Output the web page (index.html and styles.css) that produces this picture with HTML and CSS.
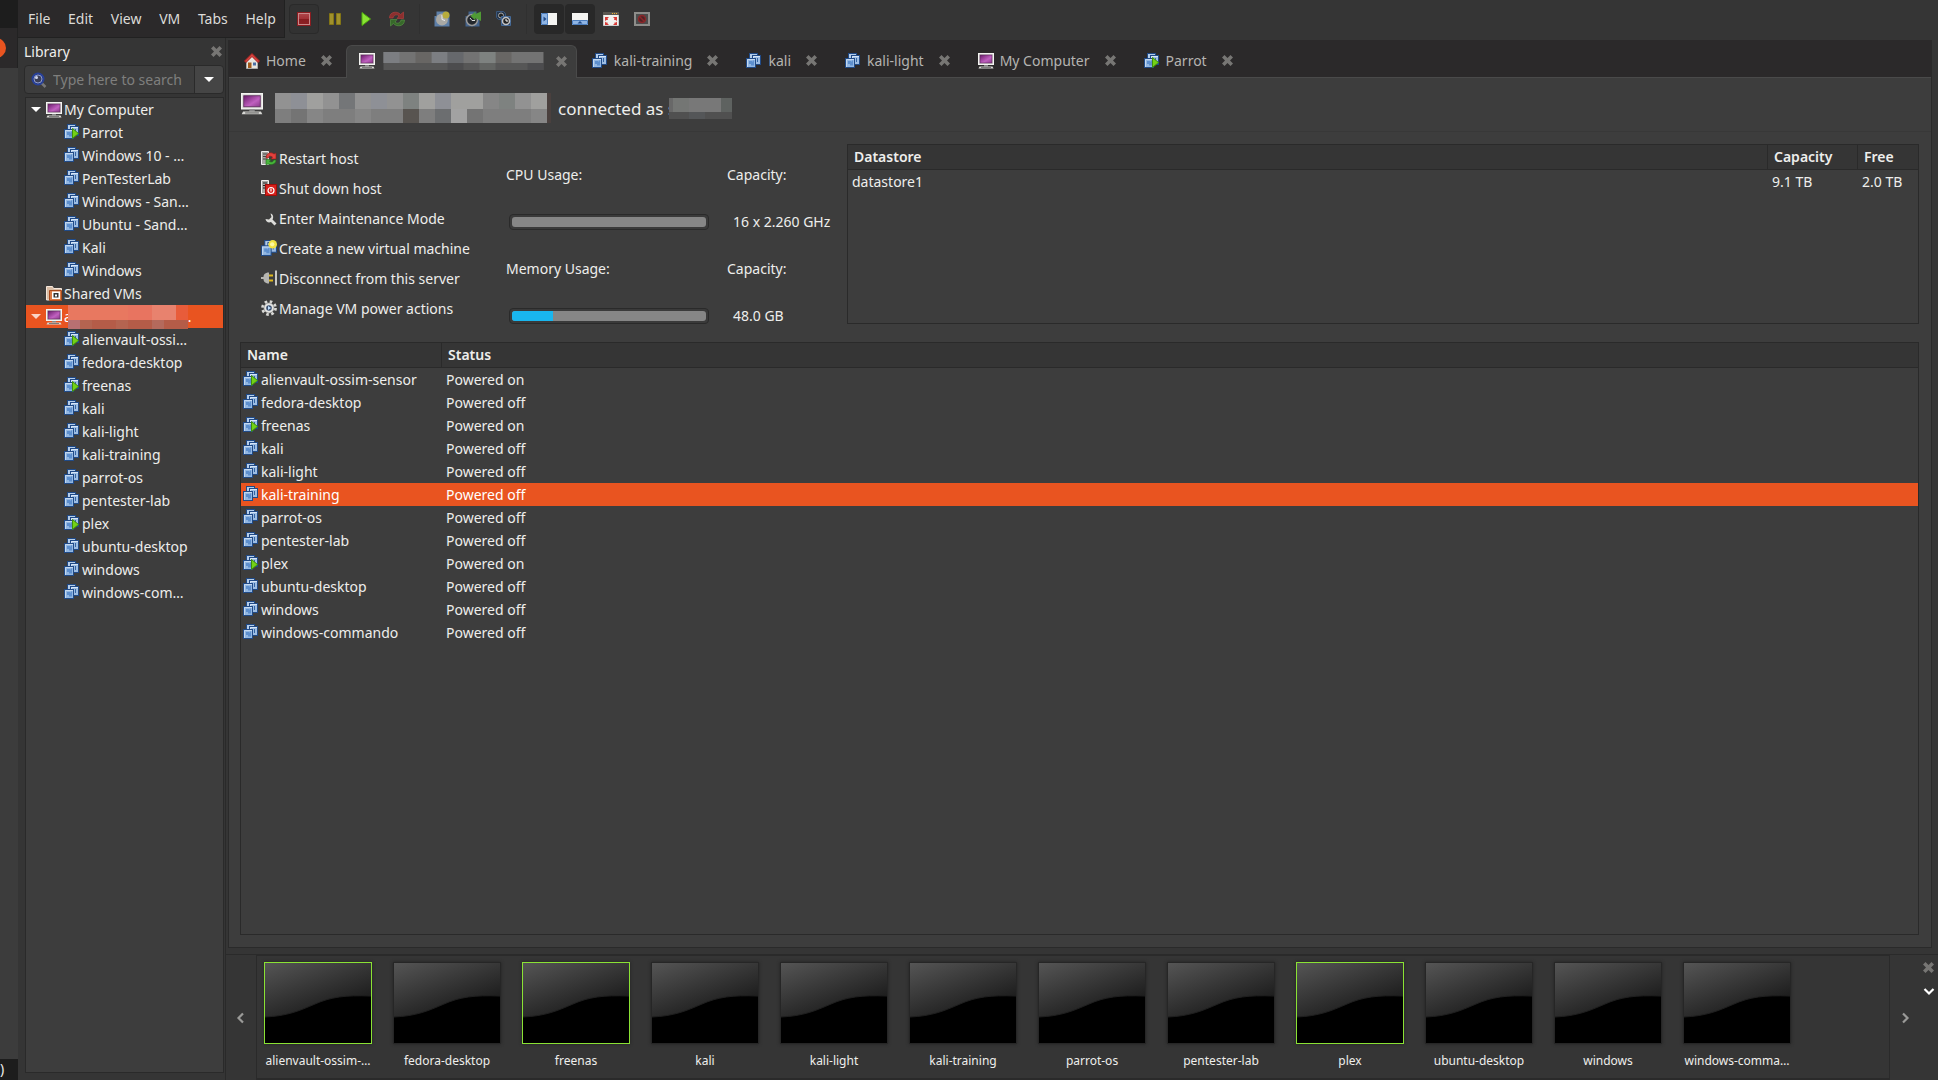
FILE: index.html
```html
<!DOCTYPE html>
<html lang="en">
<head>
<meta charset="utf-8">
<title>Workstation</title>
<link rel="stylesheet" href="styles.css">
</head>
<body>
<svg class="sprites" aria-hidden="true">
  <defs>
    <linearGradient id="screen" x1="0" y1="0" x2="1" y2="1"><stop offset="0" stop-color="#6a1b6a"/><stop offset=".6" stop-color="#c060c0"/><stop offset="1" stop-color="#8a3a8a"/></linearGradient>
    <linearGradient id="gloss" x1="0" y1="0" x2=".7" y2="1"><stop offset="0" stop-color="#555"/><stop offset="1" stop-color="#161616"/></linearGradient>
    <linearGradient id="stopfill" x1="0" y1="0" x2="0" y2="1"><stop offset="0" stop-color="#b04a4e"/><stop offset=".5" stop-color="#a03035"/><stop offset=".5" stop-color="#861c20"/><stop offset="1" stop-color="#8c2226"/></linearGradient>
  </defs>
  <symbol id="vm" viewBox="0 0 15 15">
    <rect x="3.5" y=".5" width="8" height="8" fill="#b4cdea" stroke="#204a87"/>
    <rect x="6.5" y="2.5" width="8" height="9" fill="#9dbde3" stroke="#204a87"/>
    <path d="M7.5 10V3.5H14" fill="none" stroke="#d6e5f6"/>
    <rect x=".5" y="5.500" width="9" height="9" fill="#92b7e2" stroke="#204a87"/>
    <path d="M1.500 14V6.500H9" fill="none" stroke="#c3d8f0"/>
    <path d="M3 8h3v3H3zM7 7.500h1v5H5v-1.500" fill="#5d8fce"/>
    <path d="M11 5h1v4h-1z" fill="#3465a4"/>
  </symbol>
  <symbol id="vm-on" viewBox="0 0 15 15">
    <use href="#vm" width="15" height="15"/>
    <path d="M8.500 4.500v10l6-5z" fill="#73d216" stroke="#3f8f0a"/>
  </symbol>
  <symbol id="vm-new" viewBox="0 0 15 15">
    <use href="#vm" width="15" height="15"/>
    <circle cx="11" cy="4" r="4" fill="#f0e040"/><circle cx="10.500" cy="4" r="2" fill="#fbf7a0"/>
  </symbol>
  <symbol id="host" viewBox="0 0 16 16">
    <rect x=".5" y=".5" width="15" height="11" fill="#d3d3cf" stroke="#f4f4f2"/>
    <rect x="2" y="2" width="12" height="8" fill="url(#screen)" stroke="#5c2a5c" stroke-width=".6"/>
    <path d="M6 12h4v1.500H6z" fill="#888"/><path d="M1.500 13.500h13l1 2H.5z" fill="#d8d8d4"/><path d="M3 14.500h10" stroke="#555" stroke-width=".7"/>
  </symbol>
  <symbol id="folder" viewBox="0 0 16 16">
    <path d="M.5.5h6l1 2h8v11.500H.5z" fill="#d9bda5" stroke="#f6e8dc"/>
    <path d="M3.500 4.500h12v10h-12z" fill="#d97a45" stroke="#a8491c"/>
    <rect x="6" y="5.500" width="8" height="7.500" fill="#fff"/><rect x="7.500" y="7" width="5" height="4.500" fill="#333"/><rect x="9" y="8.500" width="2" height="2" fill="#fff"/>
  </symbol>
  <symbol id="home" viewBox="0 0 16 16">
    <path d="M2.500 8v7.500h11V8L8 3z" fill="#e8e6df" stroke="#aaa"/>
    <path d="M4 9.500h3.500V15H4z" fill="#a05a1c"/><path d="M9 9.500h3v3H9z" fill="#4a6fa5"/>
    <path d="M8 .5L.5 8l1.500 1.500 6-6 6 6L15.500 8z" fill="#d9433f" stroke="#a52421"/>
  </symbol>
  <symbol id="close" viewBox="0 0 11 11"><path d="M0 2.500L2.500 0l3 3 3-3L11 2.500l-3 3 3 3L8.500 11l-3-3-3 3L0 8.500l3-3z" fill="#777674"/></symbol>
  <symbol id="search" viewBox="0 0 16 16">
    <path d="M10.500 11l4 4" stroke="#777" stroke-width="2.500"/><circle cx="7" cy="7" r="5.500" fill="#3c3f55" stroke="#27409a" stroke-width="2"/><circle cx="7" cy="7" r="4" fill="none" stroke="#8b9ad0"/><circle cx="5.500" cy="5.500" r="1.500" fill="#cfd6ee"/>
  </symbol>
  <symbol id="stop" viewBox="0 0 16 16"><rect x="1.500" y="1.500" width="13" height="13" fill="url(#stopfill)" stroke="#8a1c20"/><rect x="2.500" y="2.500" width="11" height="11" fill="none" stroke="#c9888a"/></symbol>
  <symbol id="pause" viewBox="0 0 16 16"><path d="M2.500 2.500h4v11h-4zM9.500 2.500h4v11h-4z" fill="#a0912c" stroke="#837515"/></symbol>
  <symbol id="play" viewBox="0 0 16 16"><path d="M4 1.500v13L12.500 8z" fill="#8ae234" stroke="#4fb00c"/></symbol>
  <symbol id="refresh" viewBox="0 0 16 16"><path d="M.5 7C.5 0 9 0 11.500 3.500l3-2.500v6.500H8L10 5C8 3 5 3.500 4 7z" fill="#8c2f2e" stroke="#b5423f" stroke-width=".6"/><path d="M15.500 9C15.500 16 7 16 4.500 12.500l-3 2.500V8.500H8L6 11c2 2 5 1.500 6-2z" fill="#37692a" stroke="#5a9a46" stroke-width=".6"/></symbol>
  <symbol id="snap" viewBox="0 0 16 16"><path d="M2.500.5h10v3h3v12H.5V5h2z" fill="#5d7fa8"/><circle cx="8" cy="8.500" r="6" fill="#a9a9a5"/><path d="M8 8.500V4M8 8.500l3 1" stroke="#eee"/><circle cx="12" cy="4" r="3.500" fill="#b7ac3c"/></symbol>
  <symbol id="revert" viewBox="0 0 16 16"><path d="M3.500.5h8v5h3v10H.5V5h3z" fill="#43638c"/><circle cx="7" cy="9" r="5.500" fill="#23272c" stroke="#999" stroke-width="1.500"/><path d="M7 9.500L5 7M7 9.500h3" stroke="#ddd"/><path d="M5.500 5l5-4.500V3L16 .5v9.500l-5.500-3v2.500z" fill="#4f9a34"/></symbol>
  <symbol id="manage" viewBox="0 0 16 16"><path d="M.5.500h7l2 2v6h-7l-2-2z" fill="#25364c" stroke="#3a577c"/><circle cx="5" cy="4.500" r="2.500" fill="#222" stroke="#aaa"/><path d="M5.500 5.500h9v9h-9z" fill="#2d4668" stroke="#456a98"/><circle cx="10" cy="10" r="3.500" fill="#222" stroke="#c5c5c5" stroke-width="1.500"/><path d="M10 8v2h2" stroke="#fff" fill="none"/></symbol>
  <symbol id="pane-left" viewBox="0 0 16 16"><path d="M0 2h16v12H0z" fill="#f4f4f2"/><path d="M.5 2.500h6v11h-6z" fill="#8fb5e4" stroke="#4d7fbf"/><path d="M2.500 5.500v5l3-2.500z" fill="#204a87"/></symbol>
  <symbol id="pane-bottom" viewBox="0 0 16 16"><path d="M0 2h16v12H0z" fill="#f4f4f2"/><path d="M.5 9.500h15v4H.5z" fill="#8fb5e4" stroke="#4d7fbf"/><path d="M5.500 12.500h5L8 10z" fill="#204a87"/></symbol>
  <symbol id="full" viewBox="0 0 16 16"><path d="M.5 1.500h15v13H.5z" fill="#f1f1ef" stroke="#ccc"/><path d="M0 1h16v3H0z" fill="#5a5751"/><path d="M9 2h1v1H9zM11 2h1v1h-1zM13 2h1v1h-1z" fill="#f0b030"/><path d="M2 6h4L4.500 7.500 5 9H3.500L2 10zM14 6h-4l1.500 1.500L11 9h1.500L14 10zM2 14h4l-1.500-1.500v-1H3L2 10.500zM14 14h-4l1.500-1.500v-1H13l1-1z" fill="#d83a36"/></symbol>
  <symbol id="unity" viewBox="0 0 16 16"><path d="M1 2h14v12H1z" fill="#4c4c4c" stroke="#8d8d8a" stroke-width="2"/><circle cx="8" cy="8" r="3.500" fill="#4e2426" stroke="#8a2629" stroke-width="1.500"/><path d="M5.500 5.500l5 5" stroke="#8a2629" stroke-width="1.500"/></symbol>
  <symbol id="restart" viewBox="0 0 16 16"><path d="M.5 1.500h7v13h-7z" fill="#a7a7a3" stroke="#eee"/><path d="M2 4h4M2 6.500h4M2 9h4" stroke="#444"/><path d="M5 8c0-6 6-6 8-4l2-1v6h-5l1.500-2C9 5.500 7.500 6 7.500 8z" fill="#e2413d" stroke="#8e1b18" stroke-width=".6"/><path d="M15 10c0 5-6 5-8 4l-2 1V9.500h5L8.500 11.500c2 1 4 .5 4-1.500z" fill="#49b53c" stroke="#1e6e17" stroke-width=".6"/></symbol>
  <symbol id="shutdown" viewBox="0 0 16 16"><path d="M.5.500h7v13h-7z" fill="#a7a7a3" stroke="#eee"/><path d="M2 3h4M2 5.500h4M2 8h4" stroke="#222"/><rect x="4.500" y="4.500" width="11" height="11" fill="#d8211c" stroke="#9c100c"/><circle cx="10" cy="10.500" r="3" fill="none" stroke="#fff" stroke-width="1.200"/><path d="M10 8.500v3" stroke="#fff" stroke-width="1.200"/></symbol>
  <symbol id="wrench" viewBox="0 0 16 16"><path d="M4.500 9c.5 3 3 4 5.500 3l3.500 3.500 2-2-4-4C13 7 12 4 9.500 3.500L10.500 7 8 9.500z" fill="#dcdcd9"/></symbol>
  <symbol id="plug" viewBox="0 0 16 16"><path d="M8 2.500v11C3.500 13.500 2.500 11 2.500 9H0V7h2.500C2.500 5 3.500 2.500 8 2.500z" fill="#b5b5b1"/><path d="M8 4.500h4v2H8zM8 9.500h4v2H8z" fill="#e0b91c"/><path d="M14 .5h2v15h-2z" fill="#c9c9c6"/></symbol>
  <symbol id="gear" viewBox="0 0 16 16"><circle cx="8" cy="8" r="6.500" fill="none" stroke="#d9d9d6" stroke-width="2.800" stroke-dasharray="2.550"/><circle cx="8" cy="8" r="5" fill="#e4e4e1" stroke="#aaa" stroke-width=".6"/><circle cx="8" cy="8" r="2.800" fill="#3b4f70"/><path d="M7 6v4l3-2z" fill="#bfe0ff"/></symbol>
  <symbol id="shot" viewBox="0 0 106 80"><rect width="106" height="80" fill="#000"/><path d="M0 0h106v33C80 32 66 34 50 41S22 53 0 54z" fill="url(#gloss)"/><path d="M106 33C80 32 66 34 50 41S22 53 0 54" fill="none" stroke="#1f1f1f"/></symbol>
  <symbol id="chev" viewBox="0 0 12 12"><path d="M1.500 4L6 8.500 10.500 4" fill="none" stroke="currentColor" stroke-width="2.200"/></symbol>
</svg>

<aside class="dock" aria-hidden="true"><div class="dock-top"></div><div class="dock-launch"><span class="dock-badge"></span></div><div class="dock-end">)</div></aside>

<div class="app">
  <header class="top">
    <nav class="menubar">
      <button>File</button><button>Edit</button><button>View</button><button>VM</button><button>Tabs</button><button>Help</button>
    </nav>
    <div class="toolbar">
      <button class="boxed" aria-label="Power off"><svg class="i16"><use href="#stop"/></svg></button>
      <button aria-label="Suspend"><svg class="i16"><use href="#pause"/></svg></button>
      <button aria-label="Power on"><svg class="i16"><use href="#play"/></svg></button>
      <button aria-label="Restart"><svg class="i16"><use href="#refresh"/></svg></button>
      <span class="sep"></span>
      <button aria-label="Take snapshot"><svg class="i16"><use href="#snap"/></svg></button>
      <button aria-label="Revert"><svg class="i16"><use href="#revert"/></svg></button>
      <button aria-label="Manage snapshots"><svg class="i16"><use href="#manage"/></svg></button>
      <span class="sep"></span>
      <button class="pressed" aria-label="Library"><svg class="i16"><use href="#pane-left"/></svg></button>
      <button class="pressed" aria-label="Thumbnail bar"><svg class="i16"><use href="#pane-bottom"/></svg></button>
      <button aria-label="Full screen"><svg class="i16"><use href="#full"/></svg></button>
      <button aria-label="Unity"><svg class="i16"><use href="#unity"/></svg></button>
    </div>
  </header>

  <div class="main">
    <aside class="library">
      <div class="library-head"><h2>Library</h2><button class="x" aria-label="Close library"><svg><use href="#close"/></svg></button></div>
      <div class="search">
        <svg class="i16"><use href="#search"/></svg>
        <input type="text" placeholder="Type here to search" aria-label="Search library">
        <button aria-label="Filter"><span class="tri"></span></button>
      </div>
      <ul class="tree">
        <li class="node"><span class="tri"></span><svg class="i16"><use href="#host"/></svg>My Computer</li>
        <li class="leaf"><svg class="i15"><use href="#vm-on"/></svg>Parrot</li>
        <li class="leaf"><svg class="i15"><use href="#vm"/></svg>Windows 10 - …</li>
        <li class="leaf"><svg class="i15"><use href="#vm"/></svg>PenTesterLab</li>
        <li class="leaf"><svg class="i15"><use href="#vm"/></svg>Windows - San…</li>
        <li class="leaf"><svg class="i15"><use href="#vm"/></svg>Ubuntu - Sand…</li>
        <li class="leaf"><svg class="i15"><use href="#vm"/></svg>Kali</li>
        <li class="leaf"><svg class="i15"><use href="#vm"/></svg>Windows</li>
        <li class="node"><span class="tri none"></span><svg class="i16"><use href="#folder"/></svg>Shared VMs</li>
        <li class="node selected"><span class="tri"></span><svg class="i16"><use href="#host"/></svg><span>a</span><svg class="mask-tree" viewBox="0 0 120 24">
          <path fill="#e87860" d="M0 0h120v15H0z"/><path fill="#e87460" d="M60 0h24v15H60z"/><path fill="#e8826e" d="M84 0h24v15H84z"/><path fill="#e85c3a" d="M108 0h12v15h-12z"/>
          <path fill="#b45c48" d="M0 15h120v9H0z"/><path fill="#b87072" d="M0 15h12v9H0z"/><path fill="#b46450" d="M12 15h12v9H12zM48 15h12v9H48z"/><path fill="#b46a5c" d="M84 15h12v9H84z"/></svg>.</li>
        <li class="leaf"><svg class="i15"><use href="#vm-on"/></svg>alienvault-ossi…</li>
        <li class="leaf"><svg class="i15"><use href="#vm"/></svg>fedora-desktop</li>
        <li class="leaf"><svg class="i15"><use href="#vm-on"/></svg>freenas</li>
        <li class="leaf"><svg class="i15"><use href="#vm"/></svg>kali</li>
        <li class="leaf"><svg class="i15"><use href="#vm"/></svg>kali-light</li>
        <li class="leaf"><svg class="i15"><use href="#vm"/></svg>kali-training</li>
        <li class="leaf"><svg class="i15"><use href="#vm"/></svg>parrot-os</li>
        <li class="leaf"><svg class="i15"><use href="#vm"/></svg>pentester-lab</li>
        <li class="leaf"><svg class="i15"><use href="#vm-on"/></svg>plex</li>
        <li class="leaf"><svg class="i15"><use href="#vm"/></svg>ubuntu-desktop</li>
        <li class="leaf"><svg class="i15"><use href="#vm"/></svg>windows</li>
        <li class="leaf"><svg class="i15"><use href="#vm"/></svg>windows-com…</li>
      </ul>
    </aside>

    <div class="work">
      <section class="notebook">
        <div class="tabs">
          <div class="tab"><svg class="i16"><use href="#home"/></svg><span>Home</span><button class="x" aria-label="Close tab"><svg><use href="#close"/></svg></button></div>
          <div class="tab active"><svg class="i16"><use href="#host"/></svg><svg class="mask-tab" viewBox="0 0 160 18">
            <path fill="#737373" d="M0 0h160v11H0z"/><path fill="#7c7e82" d="M0 0h16v11H0zM48 0h16v11H48z"/><path fill="#686664" d="M32 0h16v11H32zM112 0h16v11h-16z"/><path fill="#66686c" d="M64 0h16v11H64z"/><path fill="#7e8280" d="M96 0h16v11H96z"/>
            <path fill="#565656" d="M0 11h160v7H0z"/><path fill="#4c4c4e" d="M64 11h16v7H64zM144 11h16v7h-16z"/><path fill="#626462" d="M96 11h16v7H96z"/></svg><button class="x" aria-label="Close tab"><svg><use href="#close"/></svg></button></div>
          <div class="tab"><svg class="i15"><use href="#vm"/></svg><span>kali-training</span><button class="x" aria-label="Close tab"><svg><use href="#close"/></svg></button></div>
          <div class="tab"><svg class="i15"><use href="#vm"/></svg><span>kali</span><button class="x" aria-label="Close tab"><svg><use href="#close"/></svg></button></div>
          <div class="tab"><svg class="i15"><use href="#vm"/></svg><span>kali-light</span><button class="x" aria-label="Close tab"><svg><use href="#close"/></svg></button></div>
          <div class="tab"><svg class="i16"><use href="#host"/></svg><span>My Computer</span><button class="x" aria-label="Close tab"><svg><use href="#close"/></svg></button></div>
          <div class="tab"><svg class="i15"><use href="#vm-on"/></svg><span>Parrot</span><button class="x" aria-label="Close tab"><svg><use href="#close"/></svg></button></div>
        </div>

        <div class="host-head">
          <svg class="i22"><use href="#host"/></svg>
          <svg class="mask-host" viewBox="0 0 276 30">
            <path fill="#929292" d="M0 0h272v16H0z"/><path fill="#8e9096" d="M16 0h16v16H16zM96 0h16v16H96zM160 0h16v16h-16z"/><path fill="#a0a09e" d="M32 0h16v16H32zM144 0h16v16h-16zM176 0h32v16h-32zM256 0h16v16h-16z"/><path fill="#747678" d="M64 0h16v16H64z"/><path fill="#7e8280" d="M128 0h16v16h-16zM224 0h16v16h-16z"/><path fill="#868686" d="M208 0h16v16h-16z"/>
            <path fill="#7e7e7e" d="M0 16h272v14H0z"/><path fill="#747474" d="M16 16h16v14H16zM192 16h16v14h-16z"/><path fill="#868686" d="M32 16h16v14H32zM80 16h16v14H80zM256 16h16v14h-16z"/><path fill="#585450" d="M128 16h16v14h-16z"/><path fill="#6c6e70" d="M160 16h16v14h-16z"/><path fill="#a2a2a2" d="M176 16h16v14h-16z"/><path fill="#4a403e" d="M272 0h4v30h-4z"/></svg>
          <h1>connected as s</h1>
          <svg class="mask-user" viewBox="0 0 63 21"><path fill="#686868" d="M0 0h4v14H0z"/><path fill="#747674" d="M4 0h16v14H4z"/><path fill="#787878" d="M20 0h32v14H20z"/><path fill="#5e6260" d="M52 0h11v14H52z"/><path fill="#505050" d="M0 14h63v7H0z"/><path fill="#545658" d="M20 14h16v7H20z"/></svg>
        </div>

        <div class="host-body">
          <div class="summary">
            <div class="actions">
              <a href="#"><svg class="i16"><use href="#restart"/></svg>Restart host</a>
              <a href="#"><svg class="i16"><use href="#shutdown"/></svg>Shut down host</a>
              <a href="#"><svg class="i16"><use href="#wrench"/></svg>Enter Maintenance Mode</a>
              <a href="#"><svg class="i16"><use href="#vm-new"/></svg>Create a new virtual machine</a>
              <a href="#"><svg class="i16"><use href="#plug"/></svg>Disconnect from this server</a>
              <a href="#"><svg class="i16"><use href="#gear"/></svg>Manage VM power actions</a>
            </div>
            <div class="stats">
              <label for="cpu">CPU Usage:</label><span>Capacity:</span>
              <progress id="cpu" max="100" value="0"></progress><span class="value">16 x 2.260 GHz</span>
              <label for="mem">Memory Usage:</label><span>Capacity:</span>
              <progress id="mem" max="100" value="21"></progress><span class="value">48.0 GB</span>
            </div>
            <div class="box">
              <table>
                <colgroup><col><col class="col-cap"><col class="col-free"></colgroup>
                <thead><tr><th>Datastore</th><th>Capacity</th><th>Free</th></tr></thead>
                <tbody><tr><td>datastore1</td><td>9.1 TB</td><td>2.0 TB</td></tr></tbody>
              </table>
            </div>
          </div>
          <div class="box vms">
            <table>
              <colgroup><col class="col-name"><col></colgroup>
              <thead><tr><th>Name</th><th>Status</th></tr></thead>
              <tbody>
                <tr><td class="vm"><svg class="i15"><use href="#vm-on"/></svg>alienvault-ossim-sensor</td><td>Powered on</td></tr>
                <tr><td class="vm"><svg class="i15"><use href="#vm"/></svg>fedora-desktop</td><td>Powered off</td></tr>
                <tr><td class="vm"><svg class="i15"><use href="#vm-on"/></svg>freenas</td><td>Powered on</td></tr>
                <tr><td class="vm"><svg class="i15"><use href="#vm"/></svg>kali</td><td>Powered off</td></tr>
                <tr><td class="vm"><svg class="i15"><use href="#vm"/></svg>kali-light</td><td>Powered off</td></tr>
                <tr class="selected"><td class="vm"><svg class="i15"><use href="#vm"/></svg>kali-training</td><td>Powered off</td></tr>
                <tr><td class="vm"><svg class="i15"><use href="#vm"/></svg>parrot-os</td><td>Powered off</td></tr>
                <tr><td class="vm"><svg class="i15"><use href="#vm"/></svg>pentester-lab</td><td>Powered off</td></tr>
                <tr><td class="vm"><svg class="i15"><use href="#vm-on"/></svg>plex</td><td>Powered on</td></tr>
                <tr><td class="vm"><svg class="i15"><use href="#vm"/></svg>ubuntu-desktop</td><td>Powered off</td></tr>
                <tr><td class="vm"><svg class="i15"><use href="#vm"/></svg>windows</td><td>Powered off</td></tr>
                <tr><td class="vm"><svg class="i15"><use href="#vm"/></svg>windows-commando</td><td>Powered off</td></tr>
              </tbody>
            </table>
          </div>
        </div>
      </section>

      <section class="thumbbar">
        <button class="scroll left" aria-label="Scroll left"><svg><use href="#chev"/></svg></button>
        <div class="thumbs">
          <figure class="on"><svg><use href="#shot"/></svg><figcaption>alienvault-ossim-…</figcaption></figure>
          <figure><svg><use href="#shot"/></svg><figcaption>fedora-desktop</figcaption></figure>
          <figure class="on"><svg><use href="#shot"/></svg><figcaption>freenas</figcaption></figure>
          <figure><svg><use href="#shot"/></svg><figcaption>kali</figcaption></figure>
          <figure><svg><use href="#shot"/></svg><figcaption>kali-light</figcaption></figure>
          <figure><svg><use href="#shot"/></svg><figcaption>kali-training</figcaption></figure>
          <figure><svg><use href="#shot"/></svg><figcaption>parrot-os</figcaption></figure>
          <figure><svg><use href="#shot"/></svg><figcaption>pentester-lab</figcaption></figure>
          <figure class="on"><svg><use href="#shot"/></svg><figcaption>plex</figcaption></figure>
          <figure><svg><use href="#shot"/></svg><figcaption>ubuntu-desktop</figcaption></figure>
          <figure><svg><use href="#shot"/></svg><figcaption>windows</figcaption></figure>
          <figure><svg><use href="#shot"/></svg><figcaption>windows-comma…</figcaption></figure>
        </div>
        <button class="scroll right" aria-label="Scroll right"><svg><use href="#chev"/></svg></button>
        <div class="thumb-tools">
          <button class="x" aria-label="Close thumbnail bar"><svg><use href="#close"/></svg></button>
          <button class="more" aria-label="Options"><svg><use href="#chev"/></svg></button>
        </div>
      </section>
    </div>
  </div>
</div>
</body>
</html>
```
FILE: styles.css
```css
* { box-sizing: border-box; }

body {
  margin: 0;
  height: 100vh;
  display: flex;
  overflow: hidden;
  background: #353535;
  color: #eeeeec;
  font: 14px/23px "Noto Sans", "Open Sans", sans-serif;
}

button {
  padding: 0;
  border: 0;
  background: none;
  color: inherit;
  font: inherit;
}

svg { display: block; flex: none; }
.sprites { position: absolute; width: 0; height: 0; }
.i15 { width: 15px; height: 15px; }
.i16 { width: 16px; height: 16px; }
.i22 { width: 22px; height: 22px; }

/* Desktop dock, left of the window */
.dock { width: 18px; flex: none; display: flex; flex-direction: column; overflow: hidden; background: #3c3c3c; }
.dock-top { height: 28px; background: #1d1d1d; }
.dock-launch { height: 40px; padding-top: 10px; background: #2b292a; border-right: 1px solid #222; }
.dock-badge { display: block; width: 20px; height: 20px; margin-left: -14px; border-radius: 50%; background: #e95420; }
.dock-end { height: 21px; margin-top: auto; line-height: 20px; background: #1d1d1d; }

.app { flex: 1; min-width: 0; display: flex; flex-direction: column; }

/* Menu and toolbar */
.top { display: flex; height: 38px; flex: none; }
.menubar {
  display: flex;
  width: 267px;
  padding: 0 0 0 2px;
  background: #2b292a;
  border-right: 1px solid #212121;
  border-bottom: 1px solid #212121;
  justify-content: space-between;
}
.menubar button { padding: 0 8px; color: #dcdbd8; }
.toolbar { display: flex; align-items: center; gap: 1px; padding-left: 4px; }
.toolbar button { width: 30px; height: 30px; display: grid; place-items: center; border-radius: 4px; }
.toolbar .boxed { border: 1px solid #2a2a2a; background: #323232; }
.toolbar .pressed { background: #282828; }
.sep { width: 1px; height: 30px; margin: 0 6px; background: #303030; }

.main { flex: 1; min-height: 0; display: flex; }

/* Library */
.library { width: 208px; flex: none; display: flex; flex-direction: column; padding: 0 1px 7px 6px; border-right: 1px solid #2a2a2a; }
.library-head { display: flex; align-items: center; justify-content: space-between; height: 27px; padding-right: 2px; }
h2 { margin: 0; font-size: 14px; font-weight: 400; }
.x { width: 11px; height: 11px; flex: none; }
.x svg { width: 11px; height: 11px; }
.search { display: flex; align-items: center; height: 29px; padding-left: 6px; border: 1px solid #2a2a2a; border-radius: 4px; background: #3d3d3d; }
.search input { flex: 1; min-width: 0; padding: 0 0 0 6px; border: 0; background: none; color: inherit; font: inherit; }
.search input::placeholder { color: #7f7f7d; opacity: 1; }
.search button { width: 29px; height: 27px; display: grid; place-items: center; border-left: 1px solid #2a2a2a; background: #454545; border-radius: 0 4px 4px 0; }
.tri { width: 10px; height: 5px; flex: none; background: #fff; clip-path: polygon(0 0, 100% 0, 50% 100%); }
.tree { flex: 1; margin: 3px 0 0 1px; padding: 0; list-style: none; border: 1px solid #2a2a2a; background: #3d3d3d; overflow: hidden; }
.tree li { display: flex; align-items: center; height: 23px; white-space: nowrap; }
.tree .node { gap: 5px; padding-left: 5px; }
.tree .node .i16 { margin-right: -3px; }
.tree .leaf { gap: 3px; padding-left: 38px; }
.leaf .i15 { margin-bottom: 2px; }
.tree .none { visibility: hidden; }
.selected { background: #e95420; color: #fff; }
.selected .tri { opacity: .75; }
.tree .selected { gap: 0; }
.tree .selected .i16 { margin: 0 2px 0 5px; }
.mask-tree { width: 120px; height: 24px; margin-left: -4px; }

/* Notebook */
.work { flex: 1; min-width: 0; display: flex; flex-direction: column; }
.notebook { flex: 1; min-height: 0; display: flex; flex-direction: column; margin: 2px 6px 6px 2px; border: 1px solid #2a2a2a; border-top: 0; background: #3d3d3d; }
.tabs { display: flex; align-items: flex-end; gap: 4px; height: 38px; padding-left: 3px; background: #2b292a; box-shadow: inset 0 -1px #4a4a4a; color: #b5b4b1; }
.tab { display: flex; align-items: center; height: 33px; padding: 0 12px 2px; }
.tab span { margin: 0 15px 0 6px; }
.tab .i15 { margin-right: 1px; }
.tab.active { width: 231px; margin: 0 -1px 0 -2px; border: 1px solid #4a4a4a; border-bottom: 0; border-radius: 6px 6px 0 0; background: #3d3d3d; }
.mask-tab { width: 161px; height: 18px; margin: 0 12px 0 8px; }

.host-head { display: flex; align-items: center; height: 54px; padding: 15px 12px 8px; border-bottom: 1px solid #383838; }
.host-head .i22 { align-self: flex-start; }
.mask-host { width: 276px; height: 30px; margin: 0 7px 0 12px; }
h1 { margin: 0; font-size: 17px; font-weight: 400; white-space: nowrap; }
.mask-user { width: 63px; height: 21px; margin-left: -7px; }

.host-body { flex: 1; min-height: 0; display: flex; flex-direction: column; gap: 18px; padding: 12px 12px 12px 11px; }
.summary { display: grid; grid-template-columns: 266px 341px 1fr; }
.actions { padding-left: 21px; }
.actions a { display: flex; align-items: center; gap: 2px; height: 30px; padding-bottom: 2px; color: inherit; text-decoration: none; }
.stats { display: grid; grid-template-columns: 221px 1fr; grid-auto-rows: 16px; row-gap: 31px; align-content: start; align-items: center; padding-top: 23px; line-height: 16px; }
.stats .value { padding-left: 6px; }
progress { appearance: none; display: block; width: 200px; height: 16px; margin-left: 3px; padding: 2px; border: 1px solid #2a2a2a; border-radius: 4px; background: #3a3a3a; }
progress::-webkit-progress-bar { background: #868686; border-radius: 3px; overflow: hidden; }
progress::-webkit-progress-value { background: #19b6ee; }

.box { border: 1px solid #2a2a2a; overflow: hidden; }
.vms { flex: 1; min-height: 0; }
table { width: 100%; table-layout: fixed; border-collapse: separate; border-spacing: 0; }
th { height: 25px; padding: 0 6px 1px; line-height: 22px; text-align: left; font-weight: 600; background: #353535; border-bottom: 1px solid #2a2a2a; }
th + th { border-left: 1px solid #2a2a2a; }
td { height: 23px; padding: 0 4px; white-space: nowrap; }
td + td { padding-left: 5px; }
.vm .i15 { display: inline-block; margin-right: 3px; vertical-align: -1px; }
td.vm { padding-left: 2px; }
.col-cap { width: 90px; }
.col-free { width: 61px; }
.col-name { width: 200px; }

/* Thumbnail bar */
.thumbbar { display: flex; height: 126px; flex: none; border-top: 1px solid #2a2a2a; }
.scroll { width: 30px; flex: none; display: grid; place-items: center; color: #9a9a98; }
.scroll svg, .more svg { width: 12px; height: 12px; }
.left svg { transform: rotate(90deg); }
.right svg { transform: rotate(-90deg); }
.thumbs { flex: 1; min-width: 0; display: flex; gap: 21px; padding: 6px 0 0 7px; border: solid #2a2a2a; border-width: 1px 1px 2px; overflow: hidden; }
figure { width: 108px; flex: none; margin: 0; text-align: center; font-size: 12px; line-height: 16px; white-space: nowrap; }
figure svg { width: 108px; height: 82px; border: 1px solid #262626; box-shadow: 0 0 3px #222; }
figure.on svg { border-color: #8ae234; }
figcaption { margin-top: 9px; }
.thumb-tools { width: 18px; flex: none; display: flex; flex-direction: column; gap: 12px; padding: 7px 0 0 3px; }
.more { width: 12px; color: #fff; }
```
